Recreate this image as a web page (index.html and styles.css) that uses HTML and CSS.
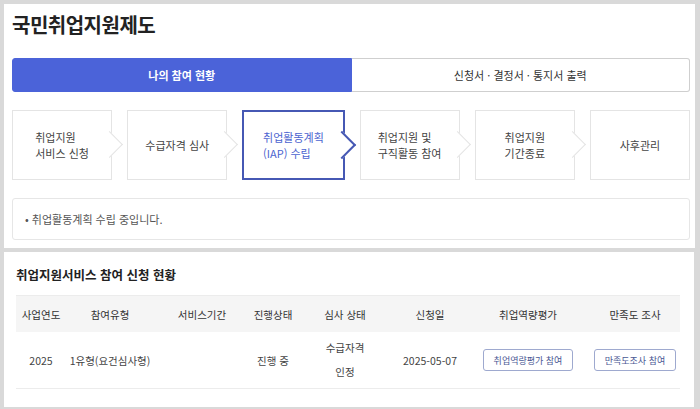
FILE: index.html
```html
<!DOCTYPE html>
<html lang="ko">
<head>
    <meta charset="UTF-8">
    <meta name="viewport" content="width=device-width, initial-scale=1.0">
    <title>국민취업지원제도</title>
    <link rel="stylesheet" href="styles.css">
</head>
<body>
    <div class="panel top-panel">
        <h1 class="page-title">국민취업지원제도</h1>

        <div class="tabs">
            <div class="tab active">나의 참여 현황</div>
            <div class="tab">신청서 · 결정서 · 통지서 출력</div>
        </div>

        <!-- 진행 단계 -->
        <div class="steps">
            <div class="step"><div>취업지원<br>서비스 신청</div></div>
            <div class="step"><div>수급자격 심사</div></div>
            <div class="step current"><div>취업활동계획<br>(IAP) 수립</div></div>
            <div class="step"><div>취업지원 및<br>구직활동 참여</div></div>
            <div class="step"><div>취업지원<br>기간종료</div></div>
            <div class="step"><div>사후관리</div></div>
        </div>

        <div class="notice">• 취업활동계획 수립 중입니다.</div>
    </div>

    <div class="panel bottom-panel">
        <h2 class="section-title">취업지원서비스 참여 신청 현황</h2>
        <table class="apply-table">
            <colgroup>
                <col class="c-year">
                <col class="c-type">
                <col class="c-period">
                <col class="c-state">
                <col class="c-review">
                <col class="c-date">
                <col class="c-eval">
                <col class="c-survey">
            </colgroup>
            <thead>
                <tr>
                    <th>사업연도</th>
                    <th>참여유형</th>
                    <th>서비스기간</th>
                    <th>진행상태</th>
                    <th>심사 상태</th>
                    <th>신청일</th>
                    <th>취업역량평가</th>
                    <th>만족도 조사</th>
                </tr>
            </thead>
            <tbody>
                <tr>
                    <td>2025</td>
                    <td>1유형(요건심사형)</td>
                    <td></td>
                    <td>진행 중</td>
                    <td class="two-line">수급자격<br>인정</td>
                    <td>2025-05-07</td>
                    <td><button class="small-btn">취업역량평가 참여</button></td>
                    <td><button class="small-btn">만족도조사 참여</button></td>
                </tr>
            </tbody>
        </table>
    </div>
</body>
</html>
```

FILE: styles.css
```css
body {
    margin: 0;
    padding: 4px 5px 4px 4px;
    background-color: #d9d9d9;
    font-family: "Noto Sans CJK KR", "Noto Sans", sans-serif;
    color: #333333;
}
.panel {
    background-color: #ffffff;
}
.top-panel {
    padding: 8px 5px 8px 8px;
}
.bottom-panel {
    margin-top: 4px;
    margin-right: 1px;
    padding: 14px 14px 18px 12px;
}
.page-title {
    margin: 0;
    font-size: 20px;
    line-height: 26px;
    font-weight: 700;
    color: #222222;
    letter-spacing: -0.5px;
}
.tabs {
    display: flex;
    margin-top: 20px;
    height: 34px;
}
.tab {
    flex: 1;
    display: flex;
    align-items: center;
    justify-content: center;
    font-size: 11px;
    color: #333333;
    border: 1px solid #cfcfcf;
    border-left: none;
    border-radius: 0 3px 3px 0;
}
.tab.active {
    background-color: #4b63d9;
    border: 1px solid #4b63d9;
    border-radius: 3px 0 0 3px;
    color: #ffffff;
    font-weight: 700;
}
.steps {
    display: flex;
    gap: 15px;
    margin-top: 18px;
    height: 70px;
}
.step {
    flex: 1;
    position: relative;
    display: flex;
    align-items: center;
    justify-content: center;
    border: 1px solid #e4e4e4;
    font-size: 11px;
    line-height: 16px;
    color: #444444;
    text-align: left;
}
.step:not(:last-child)::after {
    content: "";
    position: absolute;
    right: -8px;
    top: 50%;
    width: 18px;
    height: 18px;
    margin-top: -10px;
    background-color: #ffffff;
    border-top: 1px solid #e4e4e4;
    border-right: 1px solid #e4e4e4;
    transform: rotate(45deg);
}
.step.current {
    border: 2px solid #4658b4;
    color: #4b63d0;
}
.step.current::after {
    right: -9px;
    border-top: 2px solid #4658b4;
    border-right: 2px solid #4658b4;
}
.notice {
    margin-top: 18px;
    height: 42px;
    box-sizing: border-box;
    padding: 0 12px;
    display: flex;
    align-items: center;
    border: 1px solid #e6e6e6;
    border-radius: 3px;
    font-size: 11px;
    color: #555555;
}
.section-title {
    margin: 0 0 11px 0;
    font-size: 12.5px;
    line-height: 18px;
    font-weight: 700;
    color: #222222;
}
.apply-table {
    width: 100%;
    table-layout: fixed;
    border-collapse: collapse;
    font-size: 10.5px;
    color: #444444;
}
.c-year { width: 50px; }
.c-type { width: 88px; }
.c-period { width: 96px; }
.c-state { width: 46px; }
.c-review { width: 98px; }
.c-date { width: 72px; }
.c-eval { width: 124px; }
.c-survey { width: 90px; }
.apply-table th {
    height: 36px;
    padding: 0;
    background-color: #f5f5f5;
    border-top: 1px solid #ececec;
    font-weight: 400;
    color: #333333;
    text-align: center;
    white-space: nowrap;
}
.apply-table td {
    height: 56px;
    padding: 0;
    text-align: center;
    white-space: nowrap;
    border-bottom: 1px solid #ececec;
}
.apply-table td.two-line {
    line-height: 24px;
}
.small-btn {
    height: 22px;
    padding: 0 10px;
    background-color: #ffffff;
    border: 1px solid #9ea9cf;
    border-radius: 3px;
    font-family: "Noto Sans CJK KR", "Noto Sans", sans-serif;
    font-size: 9px;
    color: #4a5894;
    cursor: pointer;
}
```
